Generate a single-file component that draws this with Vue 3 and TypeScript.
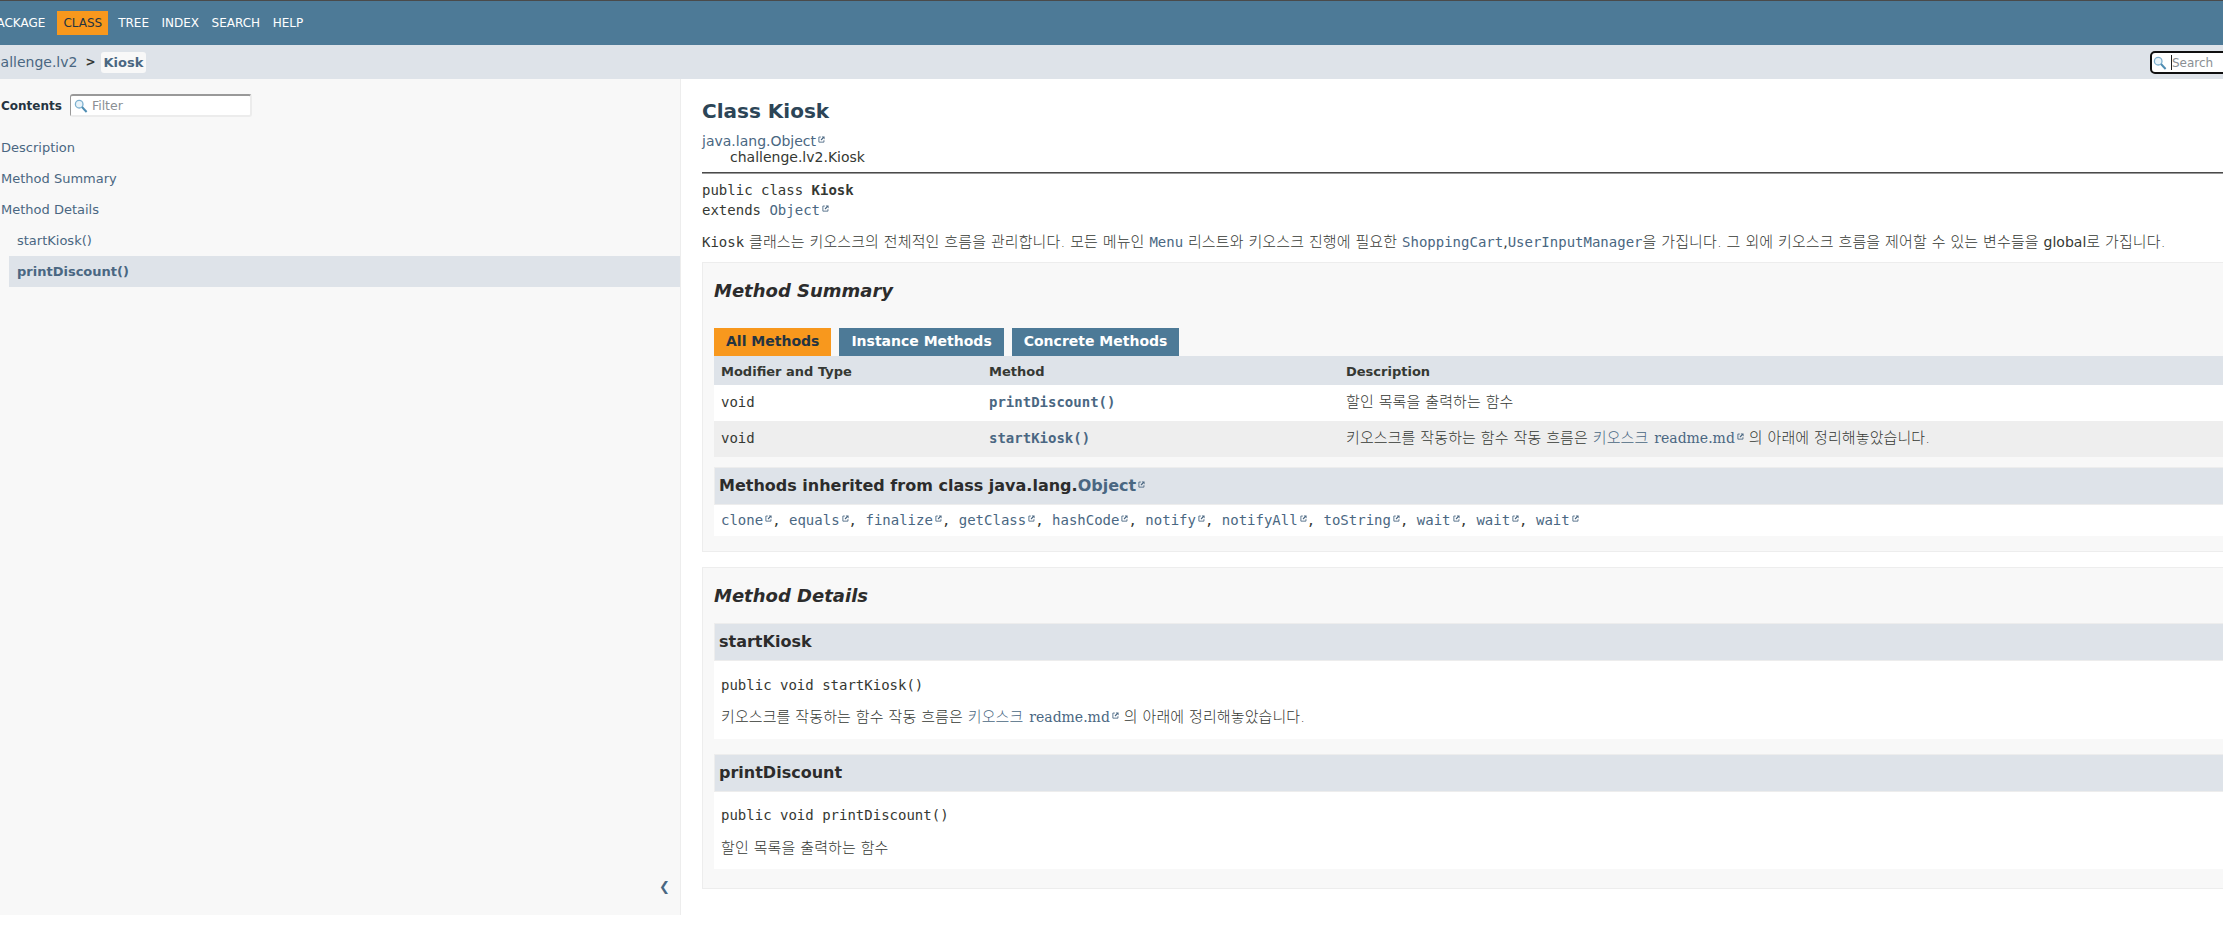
<script setup lang="ts">
const navItems: string[] = ['Package', 'Class', 'Tree', 'Index', 'Search', 'Help']
const tocItems = [
  { label: 'Description', sub: false, active: false },
  { label: 'Method Summary', sub: false, active: false },
  { label: 'Method Details', sub: false, active: false },
  { label: 'startKiosk()', sub: true, active: false },
  { label: 'printDiscount()', sub: true, active: true },
]
const tabs: string[] = ['All Methods', 'Instance Methods', 'Concrete Methods']
const inherited: string[] = ['clone', 'equals', 'finalize', 'getClass', 'hashCode', 'notify', 'notifyAll', 'toString', 'wait', 'wait', 'wait']
</script>

<template>
  <div class="viewport">
    <div class="page">
      <header class="topbar">
        <ul class="nav">
          <li v-for="n in navItems" :key="n" :class="{ current: n === 'Class' }">{{ n }}</li>
        </ul>
      </header>
      <div class="subnav">
        <div class="crumbs">
          <a class="crumb">challenge.lv2</a>
          <span class="sep">&gt;</span>
          <span class="crumb-cur">Kiosk</span>
        </div>
        <div class="search-box">
          <svg class="glass" viewBox="0 0 14 14" width="14" height="14"><circle cx="5.2" cy="5.2" r="3.8" fill="#e8f3f9" stroke="#7db0cf" stroke-width="1.3"/><path d="M8 8 12.6 13" stroke="#4f8db3" stroke-width="2"/></svg>
          <span class="caret"></span>
          <span class="ph">Search</span>
        </div>
      </div>
      <div class="columns">
        <aside class="sidebar">
          <div class="toc-head">
            <b>Contents</b>
            <div class="filter">
              <svg class="glass" viewBox="0 0 14 14" width="14" height="14"><circle cx="5.2" cy="5.2" r="3.8" fill="#e8f3f9" stroke="#7db0cf" stroke-width="1.3"/><path d="M8 8 12.6 13" stroke="#4f8db3" stroke-width="2"/></svg>
              <span class="ph">Filter</span>
            </div>
          </div>
          <ul class="toc">
            <li v-for="t in tocItems" :key="t.label" :class="{ sub: t.sub, active: t.active }">{{ t.label }}</li>
          </ul>
          <div class="collapse">❮</div>
        </aside>
        <main class="content">
          <h1 class="title">Class Kiosk</h1>
          <div class="inherit">
            <div><a class="link">java.lang.Object</a><svg class="ext" viewBox="0 0 8 8"><use href="#ext" /></svg></div>
            <div class="inherit-sub">challenge.lv2.Kiosk</div>
          </div>
          <hr class="rule" />
          <div class="sig">
            <div>public class <b>Kiosk</b></div>
            <div>extends <a class="link">Object</a><svg class="ext" viewBox="0 0 8 8"><use href="#ext" /></svg></div>
          </div>
          <p class="desc"><code>Kiosk</code><span class="ko"> 클래스는 키오스크의 전체적인 흐름을 관리합니다. 모든 메뉴인 </span><code class="link">Menu</code><span class="ko"> 리스트와 키오스크 진행에 필요한 </span><code class="link">ShoppingCart</code>,<code class="link">UserInputManager</code><span class="ko">을 가집니다. 그 외에 키오스크 흐름을 제어할 수 있는 변수들을 </span>global<span class="ko">로 가집니다.</span></p>

          <section class="panel summary">
            <h2>Method Summary</h2>
            <div class="tabs">
              <span v-for="(t, i) in tabs" :key="t" class="tab" :class="{ on: i === 0 }">{{ t }}</span>
            </div>
            <div class="grid ghead">
              <div>Modifier and Type</div><div>Method</div><div>Description</div>
            </div>
            <div class="grid row">
              <code>void</code><code class="link bold">printDiscount()</code><div class="ko">할인 목록을 출력하는 함수</div>
            </div>
            <div class="grid row even">
              <code>void</code><code class="link bold">startKiosk()</code>
              <div><span class="ko">키오스크를 작동하는 함수 작동 흐름은 </span><a class="link ko">키오스크</a> <a class="link serif">readme.md</a><svg class="ext" viewBox="0 0 8 8"><use href="#ext" /></svg><span class="ko"> 의 아래에 정리해놓았습니다.</span></div>
            </div>
            <h3 class="bar inherited-bar">Methods inherited from class java.lang.<a class="link">Object</a><svg class="ext" viewBox="0 0 8 8"><use href="#ext" /></svg></h3>
            <div class="inherited-list">
              <template v-for="(m, i) in inherited" :key="i"><code class="link">{{ m }}</code><svg class="ext" viewBox="0 0 8 8"><use href="#ext" /></svg><code v-if="i < inherited.length - 1">, </code></template>
            </div>
          </section>

          <section class="panel details">
            <h2>Method Details</h2>
            <h3 class="bar detail-bar">startKiosk</h3>
            <div class="detail-body first">
              <code>public void startKiosk()</code>
              <p><span class="ko">키오스크를 작동하는 함수 작동 흐름은 </span><a class="link ko">키오스크</a> <a class="link serif">readme.md</a><svg class="ext" viewBox="0 0 8 8"><use href="#ext" /></svg><span class="ko"> 의 아래에 정리해놓았습니다.</span></p>
            </div>
            <h3 class="bar">printDiscount</h3>
            <div class="detail-body second">
              <code>public void printDiscount()</code>
              <p class="ko">할인 목록을 출력하는 함수</p>
            </div>
          </section>
        </main>
      </div>
      <svg width="0" height="0" class="defs"><defs><g id="ext"><path d="M3.2 1.2H1V7h5.8V4.8" fill="none" stroke="#4a6782" stroke-width="1"/><path d="M4.2 0.6H7.5V3.9L6.3 2.7 4 5 3 4 5.3 1.7Z" fill="#4a6782"/></g></defs></svg>
    </div>
  </div>
</template>

<style>
html, body { margin: 0; overflow: hidden; background: #fff; }
</style>

<style scoped>
.viewport { width: 100vw; height: 100vh; overflow: hidden; }
.page {
  width: 2500px; margin-left: -16px;
  font-family: "DejaVu Sans", "Noto Sans CJK KR", sans-serif;
  font-size: 14px; color: #353833;
}
.defs { position: absolute; }
.topbar { background: #4d7a97; border-top: 1px solid #4a4a4a; box-sizing: border-box; height: 45px; padding-top: 10px; }
.nav { display: flex; margin: 0; padding: 0; list-style: none; gap: 5px; font-size: 12px; color: #fff; text-transform: uppercase; }
.nav li { padding: 5px 6px; height: 14px; line-height: 14px; }
.nav li:nth-child(n+4) { margin-left: -4.5px; }
.nav .current { background: #f8981d; color: #253441; margin: 0 -1px 0 1px; }
.subnav { height: 34px; background: #dee3e9; display: flex; justify-content: space-between; }
.crumbs { display: flex; align-items: center; font-size: 14px; }
.crumb { color: #4a6782; margin-right: 8px; }
.sep { font-weight: bold; color: #353833; font-size: 12px; margin-right: 5px; }
.crumb-cur { background: #f8f8f8; color: #4a6782; font-weight: bold; font-size: 13px; padding: 2px 3px; border-radius: 3px; line-height: 17px; }
.search-box { width: 260px; margin-right: 74px; margin-top: 6px; height: 23px; box-sizing: border-box; border: 2px solid #101010; border-radius: 5px; background: #fff; display: flex; align-items: center; padding-left: 1px; font-size: 12px; }
.caret { width: 1px; height: 15px; background: #222; margin-left: 4px; }
.ph { color: #8a8f94; }
.columns { display: flex; }
.sidebar { width: 697px; flex: none; box-sizing: border-box; height: 836px; background: #f8f8f8; border-right: 1px solid #ededed; position: relative; padding-top: 15px; font-size: 13px; }
.toc-head { display: flex; align-items: center; padding-left: 17px; height: 23px; font-size: 12px; }
.toc-head b { color: #253441; }
.filter { margin-left: 8px; width: 182px; height: 23px; box-sizing: border-box; background: #fff; border: 2px solid #ececec; border-top: 2px solid #999; border-left: 1px solid #999; border-radius: 3px; display: flex; align-items: center; gap: 4px; padding-left: 3px; font-size: 12.5px; }
.toc { list-style: none; margin: 15px 0 0; padding: 0; color: #4a6782; }
.toc li { height: 31px; line-height: 31px; padding-left: 17px; }
.toc .sub { margin-left: 25px; padding-left: 8px; }
.toc .active { background: #dee3e9; font-weight: bold; }
.collapse { position: absolute; left: 675px; bottom: 21px; color: #4a6782; font-size: 13px; }
.content { flex: 1; padding: 0 0 0 21px; min-width: 0; }
.title { margin: 0; padding-top: 20px; font-size: 20px; line-height: 24px; color: #2c4557; font-weight: bold; }
.inherit { margin-top: 10px; font-size: 14px; line-height: 16px; }
.inherit-sub { padding-left: 28px; }
.link { color: #4a6782; }
.rule { margin: 7px 0 0; border: 0; border-top: 1px solid #4a4a4a; border-bottom: 1px solid #999; height: 0; }
.sig { margin-top: 6px; font-family: "DejaVu Sans Mono", monospace; font-size: 14px; line-height: 20px; }
code { font-family: "DejaVu Sans Mono", "Noto Sans CJK KR", monospace; font-size: 14px; }
.ko { font-size: 15px; letter-spacing: 0.1px; font-weight: 300; }
.desc { margin: 14px 0 0; line-height: 17px; font-size: 14px; height: 17px; white-space: nowrap; }
.panel { background: #f8f8f8; border: 1px solid #ededed; box-sizing: border-box; padding: 0 11px; }
.summary { margin-top: 11px; height: 290px; }
.details { margin-top: 15px; height: 322px; }
h2 { margin: 0; font-size: 18px; font-style: italic; font-weight: bold; color: #2c2c2c; padding-top: 17px; line-height: 22px; }
.tabs { display: flex; gap: 8px; margin-top: 26px; font-size: 14px; }
.tab { height: 28px; line-height: 26px; padding: 0 12px; background: #4d7a97; color: #fff; font-weight: bold; }
.tab.on { background: #f8981d; color: #253441; }
.grid { display: grid; grid-template-columns: 268px 357px 1fr; padding-left: 7px; align-items: center; }
.ghead { height: 29px; box-sizing: border-box; padding-top: 2px; background: #dee3e9; font-size: 13px; font-weight: bold; }
.row { height: 36px; box-sizing: border-box; padding-bottom: 1px; background: #fff; font-size: 14px; line-height: 17px; }
.row.even { background: #eee; }
.bold { font-weight: bold; }
.serif { font-family: "DejaVu Serif", serif; margin-left: 1.5px; }
.ext { width: 7px; height: 7px; vertical-align: 3px; margin-left: 2px; }
.bar { margin: 0; background: #dee3e9; border: 1px solid #ededed; box-sizing: border-box; height: 38px; line-height: 36px; padding-left: 4px; font-size: 16px; font-weight: bold; color: #2c2c2c; }
.inherited-bar { margin-top: 10px; }
.detail-bar { margin-top: 16px; }
.inherited-list { background: #fff; height: 31px; line-height: 31px; padding-left: 7px; }
.detail-body { background: #fff; box-sizing: border-box; padding: 0 7px; line-height: 17px; }
.detail-body.first { height: 78px; padding-top: 16px; margin-bottom: 15px; }
.detail-body.second { height: 77px; padding-top: 15px; }
.detail-body p { margin: 15px 0 0; line-height: 17px; height: 17px; }
.detail-body.second p { margin-top: 16px; }
</style>
